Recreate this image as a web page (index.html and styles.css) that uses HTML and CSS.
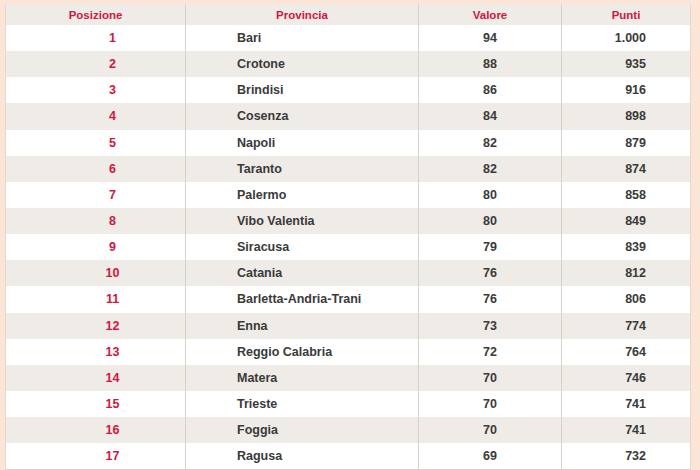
FILE: index.html
```html
<!DOCTYPE html>
<html lang="it">
<head>
<meta charset="utf-8">
<link rel="stylesheet" href="styles.css">
</head>
<body>
<div class="wrap">
<table class="rank">
<colgroup><col class="c1"><col class="c2"><col class="c3"><col class="c4"></colgroup>
<thead>
<tr><th>Posizione</th><th>Provincia</th><th>Valore</th><th>Punti</th></tr>
</thead>
<tbody>
<tr><td class="pos">1</td><td class="prov">Bari</td><td class="val">94</td><td class="pts">1.000</td></tr>
<tr><td class="pos">2</td><td class="prov">Crotone</td><td class="val">88</td><td class="pts">935</td></tr>
<tr><td class="pos">3</td><td class="prov">Brindisi</td><td class="val">86</td><td class="pts">916</td></tr>
<tr><td class="pos">4</td><td class="prov">Cosenza</td><td class="val">84</td><td class="pts">898</td></tr>
<tr><td class="pos">5</td><td class="prov">Napoli</td><td class="val">82</td><td class="pts">879</td></tr>
<tr><td class="pos">6</td><td class="prov">Taranto</td><td class="val">82</td><td class="pts">874</td></tr>
<tr><td class="pos">7</td><td class="prov">Palermo</td><td class="val">80</td><td class="pts">858</td></tr>
<tr><td class="pos">8</td><td class="prov">Vibo Valentia</td><td class="val">80</td><td class="pts">849</td></tr>
<tr><td class="pos">9</td><td class="prov">Siracusa</td><td class="val">79</td><td class="pts">839</td></tr>
<tr><td class="pos">10</td><td class="prov">Catania</td><td class="val">76</td><td class="pts">812</td></tr>
<tr><td class="pos">11</td><td class="prov">Barletta-Andria-Trani</td><td class="val">76</td><td class="pts">806</td></tr>
<tr><td class="pos">12</td><td class="prov">Enna</td><td class="val">73</td><td class="pts">774</td></tr>
<tr><td class="pos">13</td><td class="prov">Reggio Calabria</td><td class="val">72</td><td class="pts">764</td></tr>
<tr><td class="pos">14</td><td class="prov">Matera</td><td class="val">70</td><td class="pts">746</td></tr>
<tr><td class="pos">15</td><td class="prov">Trieste</td><td class="val">70</td><td class="pts">741</td></tr>
<tr><td class="pos">16</td><td class="prov">Foggia</td><td class="val">70</td><td class="pts">741</td></tr>
<tr><td class="pos">17</td><td class="prov">Ragusa</td><td class="val">69</td><td class="pts">732</td></tr>
</tbody>
</table>
</div>
</body>
</html>
```
FILE: styles.css
```css
html, body {
  margin: 0;
  padding: 0;
  background: #fbe5d6;
  height: 100%;
  overflow: hidden;
}
.wrap {
  padding: 4px 0 0 5px;
}
.rank {
  border-collapse: collapse;
  table-layout: fixed;
  width: 686px;
  font-family: "Liberation Sans", Arial, sans-serif;
  font-weight: bold;
  font-size: 12.5px;
  color: #3a3a3a;
  border-left: 1px solid #ecd6c8;
  border-right: 1px solid #ecd6c8;
}
.c1 { width: 180px; }
.c2 { width: 233px; }
.c3 { width: 143px; }
.c4 { width: 129px; }
.rank th {
  height: 21px;
  padding: 0;
  background: #efebe6;
  color: #d2163f;
  font-size: 11.5px;
  text-align: center;
  border-left: 1px solid #d6d2cc;
  vertical-align: middle;
}
.rank td {
  height: 26.15px;
  padding: 0;
  vertical-align: middle;
  border-left: 1px solid #d6d2cc;
}
.rank th:first-child, .rank td:first-child {
  border-left: none;
}
.rank tbody tr:nth-child(odd) td { background: #ffffff; }
.rank tbody tr:nth-child(even) td { background: #efebe6; }
.rank tbody tr:last-child td { border-bottom: 1px solid #d6d2cc; }
.pos {
  color: #d2163f;
  text-align: center;
  padding-left: 34px !important;
}
.prov {
  text-align: left;
  padding-left: 51px !important;
}
.val {
  text-align: center;
}
.pts {
  text-align: right;
  padding-right: 44px !important;
}
```
